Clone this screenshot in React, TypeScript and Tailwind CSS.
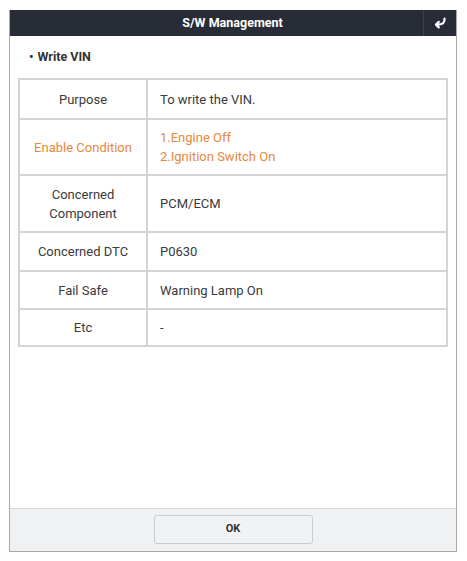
const rows = [
  { label: 'Purpose', value: ['To write the VIN.'], h: 'h-[38px]' },
  { label: 'Enable Condition', value: ['1.Engine Off', '2.Ignition Switch On'], h: 'h-[56px]', accent: true },
  { label: 'Concerned\nComponent', value: ['PCM/ECM'], h: 'h-[57px]' },
  { label: 'Concerned DTC', value: ['P0630'], h: 'h-[39px]' },
  { label: 'Fail Safe', value: ['Warning Lamp On'], h: 'h-[38px]' },
  { label: 'Etc', value: ['-'], h: 'h-[37px]' },
]

function ReturnIcon() {
  return (
    <svg width="14" height="12" viewBox="0 0 14 12" fill="none">
      <path d="M11.5 1.5C12 5.5 10 7.6 4 7.6" stroke="white" strokeWidth="2.2" strokeLinecap="round" />
      <path d="M5.8 4.8L3 7.6l2.8 2.8" stroke="white" strokeWidth="2.2" strokeLinecap="round" strokeLinejoin="round" />
    </svg>
  )
}

export default function App() {
  return (
    <div className="h-[561px] w-[467px] bg-white pl-[9px] pt-[10px] font-['Roboto',sans-serif]">
      <div className="flex h-[542px] w-[448px] flex-col border-x border-b border-[#a7a7a7]">
        <div className="flex h-[26px] bg-[#272c36]">
          <div className="flex flex-1 items-center justify-center pl-[32px] text-[12.5px] font-bold text-white">
            S/W Management
          </div>
          <div className="flex w-[33px] items-center justify-center border-l border-[#3c424d]">
            <ReturnIcon />
          </div>
        </div>
        <div className="flex-1">
          <div className="flex h-[42px] items-center pl-[19px] text-[12.5px] font-bold text-[#333]">
            <span className="mr-[4px]">•</span>Write VIN
          </div>
          <div className="ml-[8px] w-[430px] border-2 border-[#d4d4d4]">
            {rows.map((r, i) => (
              <div
                key={i}
                className={`flex ${r.h} ${i > 0 ? 'border-t-2 border-[#d4d4d4]' : ''}`}
              >
                <div
                  className={`flex w-[128px] items-center justify-center whitespace-pre-line border-r-2 border-[#d4d4d4] text-center text-[13px] leading-[19px] ${r.accent ? 'text-[#e8883a]' : 'text-[#3a3a3a]'}`}
                >
                  {r.label}
                </div>
                <div
                  className={`flex flex-1 flex-col justify-center pl-[12px] text-[13px] leading-[19px] ${r.accent ? 'text-[#e8883a]' : 'text-[#3a3a3a]'}`}
                >
                  {r.value.map((v) => (
                    <div key={v}>{v}</div>
                  ))}
                </div>
              </div>
            ))}
          </div>
        </div>
        <div className="flex h-[43px] items-start justify-center border-t border-[#d6d7d9] bg-[#f0f1f3] pt-[6px]">
          <button className="h-[29px] w-[159px] rounded-[3px] border border-[#c9cacc] bg-[#f1f2f4] text-[11px] font-bold text-[#333]">
            OK
          </button>
        </div>
      </div>
    </div>
  )
}
